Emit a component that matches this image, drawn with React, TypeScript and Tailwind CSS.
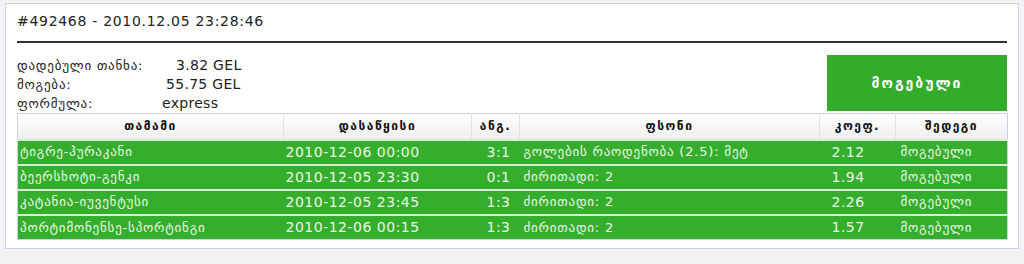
const FONT = "font-['DejaVu_Sans',Verdana,sans-serif]";

const ROWS = [
  { match: "ტიგრე-ჰურაკანი", start: "2010-12-06 00:00", score: "3:1", bet: "გოლების რაოდენობა (2.5): მეტ", coef: "2.12", result: "მოგებული" },
  { match: "ბეერსხოტი-გენკი", start: "2010-12-05 23:30", score: "0:1", bet: "ძირითადი: 2", coef: "1.94", result: "მოგებული" },
  { match: "კატანია-იუვენტუსი", start: "2010-12-05 23:45", score: "1:3", bet: "ძირითადი: 2", coef: "2.26", result: "მოგებული" },
  { match: "პორტიმონენსე-სპორტინგი", start: "2010-12-06 00:15", score: "1:3", bet: "ძირითადი: 2", coef: "1.57", result: "მოგებული" },
];

// georgian text is rendered wider in the original, so give it some tracking
const KA = "text-[13px] tracking-[0.8px]";
const NUM = "text-[14px] tracking-[0.5px]";

export default function App() {
  return (
    <div className={`h-[264px] w-[1024px] overflow-hidden bg-[#f3f3f3] ${FONT}`}>
      <div className="ml-[5px] mt-[3px] h-[246px] w-[1014px] border border-[#c6d2e6] bg-white px-[11px] pt-[9px]">
        <div className="text-[14px] leading-[16px] tracking-[0.7px] text-[#222]">#492468 - 2010.12.05 23:28:46</div>
        <div className="mt-[12px] h-[2px] bg-[#333]" />

        <div className="mt-[13px] flex">
          <div className="flex-1 leading-[18px] text-[#222]">
            <div className="flex items-baseline">
              <span className={`w-[159px] ${KA}`}>დადებული თანხა:</span>
              <span className="text-[14px] tracking-[0.3px]">3.82 GEL</span>
            </div>
            <div className="flex items-baseline">
              <span className={`w-[149px] ${KA}`}>მოგება:</span>
              <span className="text-[14px] tracking-[0.3px]">55.75 GEL</span>
            </div>
            <div className="flex items-baseline">
              <span className={`w-[145px] ${KA}`}>ფორმულა:</span>
              <span className="text-[14px] tracking-[0.3px]">express</span>
            </div>
          </div>
          <div className="mt-[-1px] flex h-[56px] w-[180px] items-center justify-center bg-[#33ac2c] text-[14px] font-bold tracking-[2px] text-white">
            მოგებული
          </div>
        </div>

        <table className="w-[991px] border-collapse border border-[#c6d2e6]">
          <thead>
            <tr className="h-[26px] bg-gradient-to-b from-white to-[#eeeeee] text-[12px] font-bold tracking-[1.5px] text-[#111]">
              <th className="w-[266px] border-r border-[#e2e2e2] font-bold">თამამი</th>
              <th className="w-[188px] border-r border-[#e2e2e2] font-bold">დასაწყისი</th>
              <th className="w-[48px] border-r border-[#e2e2e2] font-bold">ანგ.</th>
              <th className="border-r border-[#e2e2e2] font-bold">ფსონი</th>
              <th className="w-[76px] border-r border-[#e2e2e2] font-bold">კოეფ.</th>
              <th className="w-[112px] font-bold">შედეგი</th>
            </tr>
          </thead>
          <tbody>
            {ROWS.map((r) => (
              <tr key={r.match} className="h-[25px] border-t-2 border-[#d9ecd6] bg-[#35ad2d] text-[#eaf7e6]">
                <td className={`pl-[2px] ${KA}`}>{r.match}</td>
                <td className={`pl-[2px] ${NUM}`}>{r.start}</td>
                <td className={`pr-[9px] text-right ${NUM}`}>{r.score}</td>
                <td className={`pl-[4px] ${KA}`}>{r.bet}</td>
                <td className={`pl-[12px] ${NUM}`}>{r.coef}</td>
                <td className={`pl-[5px] ${KA}`}>{r.result}</td>
              </tr>
            ))}
          </tbody>
        </table>
      </div>
    </div>
  );
}
